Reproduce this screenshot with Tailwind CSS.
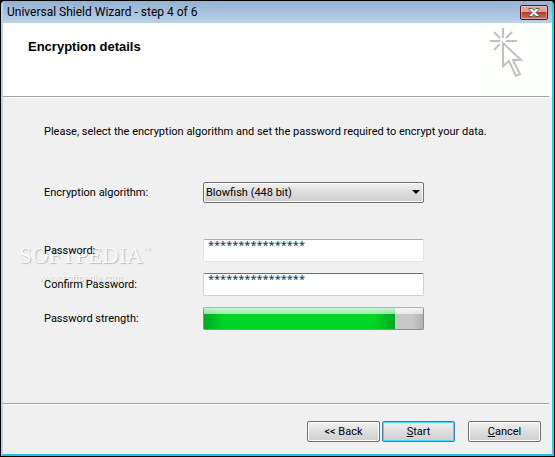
<!DOCTYPE html>
<html lang="en">
<head>
    <meta charset="UTF-8">
    <meta name="viewport" content="width=device-width, initial-scale=1.0">
    <title>Universal Shield Wizard</title>
    <script src="https://cdn.jsdelivr.net/npm/@tailwindcss/browser@4"></script>
</head>
<body class="min-h-screen flex flex-col bg-black p-px font-[Roboto,sans-serif] text-[11px] leading-4 text-black">
    <form class="grow flex flex-col rounded-t-sm overflow-hidden bg-[#f0f0f0] border-l-2 border-l-[#b9d1ea] border-r-2 border-r-[#35c8e8] border-b-2 border-b-[#1cc3e8]">
        <!-- Title bar -->
        <div class="h-[22px] shrink-0 flex items-center justify-between pl-1 pr-1 bg-linear-to-b from-[#96b1d0] to-[#b9d1ea]">
            <h1 class="text-xs">Universal Shield Wizard - step 4 of 6</h1>
            <button type="button" aria-label="Close" class="w-7 h-[15px] flex items-center justify-center rounded-xs border border-[#4b1a22] bg-linear-to-b from-[#e0a093] from-45% via-[#b83a26] via-50% to-[#d5725c] shadow-[inset_0_0_0_1px_#ffffff60]">
                <svg class="w-3 h-[9px]" viewBox="0 0 12 9">
                    <path d="M1 .5h3l2 2 2-2h3v1l-3 3 3 3v1H8l-2-2-2 2H1v-1l3-3-3-3z" fill="#fff" stroke="#535666" stroke-width="1"/>
                </svg>
            </button>
        </div>

        <!-- Header -->
        <header class="h-[73px] shrink-0 flex justify-between pl-[25px] pr-[3px] bg-white">
            <h2 class="pt-4 font-['Liberation_Sans',sans-serif] text-[13px] font-bold">Encryption details</h2>
            <div class="w-[73px] bg-[#fcfffc]">
                <svg class="w-[73px] h-[73px]" viewBox="0 0 73 73" fill="none" stroke="#c0c0c0" stroke-width="2">
                    <path d="M27 5v10M14 18h10M30 18h11M18 9l6 6M36 9l-6 6M18 27l6-6"/>
                    <path d="M27 20v23l6-5 7 15 4-2-7-14h8z"/>
                </svg>
            </div>
        </header>
        <div class="h-[2px] mr-[3px] bg-[#a0a0a0] border-b border-white"></div>

        <!-- Fields -->
        <main class="grow relative pl-[41px] pt-[26px]">
            <div class="absolute left-4 top-[144px] flex flex-col font-['Liberation_Serif',serif] text-[#fafafa]" aria-hidden="true">
                <div class="flex text-[23px] leading-7 [text-shadow:1px_1px_1px_#b8b8b8]">SOFTPEDIA<span class="text-[8px] leading-4">™</span></div>
                <div class="pl-5 font-['Noto_Sans',sans-serif] text-[9px] leading-4 [text-shadow:1px_1px_1px_#b8b8b8]">www.softpedia.com</div>
            </div>
            <p class="relative">Please, select the encryption algorithm and set the password required to encrypt your data.</p>
            <div class="relative mt-[42px] flex items-center">
                <label for="algorithm" class="w-[159px]">Encryption algorithm:</label>
                <div class="relative w-[221px]">
                    <select id="algorithm" class="block w-full h-[21px] appearance-none pl-[2px] rounded-xs border border-[#707070] bg-linear-to-b from-[#f2f2f2] from-0% via-[#dddddd] via-50% to-[#cfcfcf] shadow-[inset_0_0_0_1px_#fcfcfc]">
                        <option>Blowfish (448 bit)</option>
                    </select>
                    <svg class="absolute right-1 top-2 w-2 h-1 pointer-events-none" viewBox="0 0 8 4"><path d="M0 0h8L4 4z"/></svg>
                </div>
            </div>
            <div class="relative mt-9 flex items-center">
                <label for="password" class="w-[159px]">Password:</label>
                <input id="password" type="text" value="****************" class="w-[221px] h-[23px] px-1 pb-3 font-['Noto_Sans',sans-serif] text-[11px] leading-3 rounded-xs border border-[#e2e3ea] border-t-[#abadb3] bg-white text-[#003366]">
            </div>
            <div class="relative mt-[11px] flex items-center">
                <label for="confirm" class="w-[159px]">Confirm Password:</label>
                <input id="confirm" type="text" value="****************" class="w-[221px] h-[23px] px-1 pb-3 font-['Noto_Sans',sans-serif] text-[11px] leading-3 rounded-xs border border-[#b7d9ed] border-t-[#3d7bad] bg-white text-[#003366]">
            </div>
            <div class="relative mt-[11px] flex items-center">
                <span id="strength" class="w-[159px]">Password strength:</span>
                <div role="progressbar" aria-labelledby="strength" aria-valuenow="87" class="w-[221px] h-[23px] flex rounded-xs border border-[#8e8e8e] border-t-[#b2b2b2] bg-linear-to-r from-[#c8c8c8] from-95% to-[#b0b0b0]">
                    <div class="relative w-full">
                        <div class="h-full bg-linear-to-r from-[#00a823] via-[#00d328] via-10% to-[#00d328]" style="width: 87%">
                            <div class="h-full ml-auto w-5 bg-linear-to-r from-[#00d328] to-[#00a823]"></div>
                        </div>
                        <div class="absolute inset-x-0 top-0 h-[6px] bg-linear-to-b from-white/80 to-white/60"></div>
                    </div>
                </div>
            </div>
        </main>

        <!-- Buttons -->
        <div class="h-[2px] mr-[3px] bg-[#a0a0a0] border-b border-white"></div>
        <footer class="h-[49px] shrink-0 flex justify-end items-start gap-[2px] pt-4 pr-[11px]">
            <button type="button" class="w-[73px] h-[21px] rounded-xs border border-[#707070] bg-linear-to-b from-[#f2f2f2] via-[#dddddd] to-[#cfcfcf] shadow-[inset_0_0_0_1px_#fcfcfc]">&lt;&lt; Back</button>
            <button type="submit" class="w-[73px] h-[21px] rounded-xs border border-[#3c7fb1] bg-linear-to-b from-[#f2f2f2] via-[#dddddd] to-[#cfcfcf] shadow-[inset_0_0_0_1px_#48d8fb]"><u>S</u>tart</button>
            <button type="button" class="ml-[11px] w-[73px] h-[21px] rounded-xs border border-[#707070] bg-linear-to-b from-[#f2f2f2] via-[#dddddd] to-[#cfcfcf] shadow-[inset_0_0_0_1px_#fcfcfc]"><u>C</u>ancel</button>
        </footer>
    </form>
</body>
</html>
